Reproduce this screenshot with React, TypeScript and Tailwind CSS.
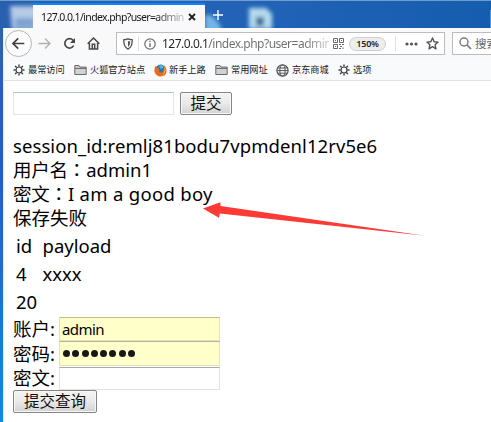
import React from 'react';

const Gear = () => (
  <svg className="h-[12px] w-[12px] shrink-0" viewBox="0 0 12 12" fill="none" stroke="#3c3c3c">
    <circle cx="6" cy="6" r="3" strokeWidth="1.2" />
    <path d="M6 .5v2M6 9.5v2M.5 6h2M9.5 6h2M2.1 2.1l1.5 1.5M8.4 8.4l1.5 1.5M2.1 9.9l1.5-1.5M8.4 3.6l1.5-1.5" strokeWidth="1.4" />
  </svg>
);

const Folder = () => (
  <svg className="h-[12px] w-[13px] shrink-0" viewBox="0 0 13 12" fill="#d2d2d2" stroke="#696969">
    <path d="M.8 10.5V1.5H5l1 1.6h6.2v7.4Z" />
    <path d="M1 4.4h11" />
  </svg>
);

const Firefox = () => (
  <svg className="h-[13px] w-[13px] shrink-0" viewBox="0 0 13 13">
    <circle cx="6.7" cy="6" r="5.4" fill="#2875b8" />
    <path d="M5 2.2 7 1l2.5 1L9 4 7 5Z" fill="#54b9dc" />
    <path d="M1.3 2 2.8 3.4 5 3.5 4.4 5.2 6 6 4.8 7.4C6 9 8.3 8.8 9.3 7.2L10 4l-.7-2.4C14 4.5 13.3 10.4 9.2 12 4.8 13.6 0 10.5.4 5.6Z" fill="#e96a1c" />
    <path d="M10.4 3c2.6 4 .2 8.2-3.7 8.4 2.7-.8 4.2-3 3.7-8.4Z" fill="#f8b334" />
  </svg>
);

const Globe = () => (
  <svg className="h-[13px] w-[13px] shrink-0" viewBox="0 0 13 13" fill="none" stroke="#555">
    <circle cx="6.5" cy="6.5" r="5.6" strokeWidth="1.2" />
    <ellipse cx="6.5" cy="6.5" rx="2.7" ry="5.6" />
    <path d="M1.6 4h9.8M1 6.6h11M1.6 9.2h9.8" />
  </svg>
);

function TabStrip() {
  return (
    <div className="relative h-[28px] shrink-0 overflow-hidden bg-gradient-to-r from-[#285fae] via-[#2263b7] to-[#155dae]">
      <svg className="absolute inset-0 h-full w-full" viewBox="0 0 491 28" preserveAspectRatio="none">
        <defs>
          <filter id="soft" x="-50%" y="-50%" width="200%" height="200%"><feGaussianBlur stdDeviation="2" /></filter>
        </defs>
        <g filter="url(#soft)">
          <path d="M10 6h28v24H12Z" fill="#b6cbe7" />
          <path d="M15 18h20v10H15Z" fill="#7da3d3" />
          <path d="M205 15h6l8 8 3 8h-17Z" fill="#76b5e7" />
          <path d="M249 8h17l6 6v15h-23Z" fill="#b4dcee" />
          <path d="M256 17h8v9h-8Z" fill="#416c91" />
        </g>
        <path d="M0 .5h491" stroke="#709ccb" />
        <path d="M490.5 10v18" stroke="#4f98dc" />
      </svg>
      <div className="relative ml-[33px] flex h-[28px] items-center">
        <div className="mt-[3px] flex h-[25px] w-[172px] shrink-0 items-center border-t-[2px] border-[#0a84ff] bg-[#f9f9fb]">
          <span className="ml-[8px] w-[145px] shrink-0 bg-[linear-gradient(90deg,#151515_78%,#d5d5d7)] bg-clip-text text-[10.5px] leading-[18px] tracking-[-0.62px] whitespace-nowrap text-transparent">127.0.0.1/index.php?user=admin</span>
          <svg className="ml-[2px] h-[8px] w-[8px] shrink-0" viewBox="0 0 8 8" stroke="#202020" strokeWidth="1.8"><path d="m1 1 6 6M7 1 1 7" /></svg>
        </div>
        <svg className="mt-[2px] ml-[7px] h-[12px] w-[12px] shrink-0" viewBox="0 0 12 12" stroke="#fff" strokeWidth="1.4"><path d="M6 1v10M1 6h10" /></svg>
      </div>
    </div>
  );
}

function Toolbar() {
  return (
    <div className="flex h-[32px] shrink-0 items-start bg-[#f9f9fa] pl-[1px]">
      <div className="mt-[2px] flex h-[27px] w-[27px] shrink-0 items-center justify-center rounded-full border border-[#b5b5b5] bg-[#fcfcfc]">
        <svg className="h-[13px] w-[13px]" viewBox="0 0 13 13" fill="none" stroke="#424244" strokeWidth="1.7"><path d="M12.3 6.5H1.2M6.2 1.3 1 6.5l5.2 5.2" /></svg>
      </div>
      <svg className="mt-[9px] ml-[6px] h-[13px] w-[13px] shrink-0" viewBox="0 0 13 13" fill="none" stroke="#b0b0b2" strokeWidth="1.3"><path d="M.5 6.5H12M7 1.5l5 5-5 5" /></svg>
      <svg className="mt-[9px] ml-[12px] h-[13px] w-[13px] shrink-0" viewBox="0 0 13 13" fill="none" stroke="#49494b" strokeWidth="1.7"><path d="M10.6 8.7A4.7 4.7 0 1 1 10 3.2L11 4.4" /><path d="M12 1v5H7Z" fill="#49494b" stroke="none" /></svg>
      <svg className="mt-[9px] ml-[11px] h-[13px] w-[13px] shrink-0" viewBox="0 0 13 13" fill="none" stroke="#49494b" strokeWidth="1.5"><path d="M.7 6.8 6.5 1l5.8 5.8M2.4 6v6h8.2V6" /><path d="M5.3 12V7.2h2.4V12" /></svg>
      <div className="mt-[4px] ml-[16px] flex h-[23px] w-[329px] shrink-0 items-center border border-[#bcbcbe] bg-white">
        <svg className="ml-[6px] h-[12px] w-[10px] shrink-0" viewBox="0 0 10 12" fill="none" stroke="#555558" strokeWidth="1.3"><path d="M.8 1.7Q3 1.6 5 .8q2 .8 4.2.9C9.4 6.6 8.3 9.6 5 11.2 1.7 9.6.6 6.6.8 1.7Z" /><path d="M5 3v6C6.7 7.7 7.2 6 7.2 3.6Z" fill="#555558" stroke="none" /></svg>
        <div className="ml-[5px] h-[15px] w-px bg-[#e2e2e3]" />
        <svg className="ml-[5px] h-[12px] w-[12px] shrink-0" viewBox="0 0 12 12" fill="none" stroke="#6d6d70"><circle cx="6" cy="6" r="5.2" strokeWidth="1.2" /><path d="M6 5.2v3.7M6 2.7v1.4" strokeWidth="1.4" /></svg>
        <span className="ml-[6px] w-[167px] shrink-0 bg-[linear-gradient(90deg,#202124_27%,#6d6d70_27%,#6d6d70_84%,#d5d5d7)] bg-clip-text text-[12px] leading-[20px] tracking-[-0.5px] whitespace-nowrap text-transparent">127.0.0.1/index.php?user=admin</span>
        <svg className="ml-[4px] h-[11px] w-[11px] shrink-0" viewBox="0 0 11 11" fill="none" stroke="#67676a"><path d="M.5.5h4v4h-4ZM6.5.5h4v4h-4ZM.5 6.5h4v4h-4Z" /><path d="M2 2.5h1M8 2.5h1M2 8.5h1M6 6.5h2M9 6.5h2M7 8.5h2M6 10.5h2M10 9.5v1.5" /></svg>
        <span className="ml-[5px] flex h-[14px] w-[37px] shrink-0 items-center justify-center rounded-full border border-[#cecfd0] bg-[#ededf0] text-[9px] leading-none font-semibold tracking-[-0.2px] text-[#252525]">150%</span>
        <div className="ml-[9px] h-[15px] w-px bg-[#e2e2e3]" />
        <svg className="ml-[9px] h-[4px] w-[13px] shrink-0" viewBox="0 0 13 4" fill="#555558"><circle cx="2" cy="2" r="1.6" /><circle cx="6.5" cy="2" r="1.6" /><circle cx="11" cy="2" r="1.6" /></svg>
        <svg className="ml-[8px] h-[13px] w-[13px] shrink-0" viewBox="0 0 13 13" fill="none" stroke="#555558" strokeWidth="1.4" strokeLinejoin="round"><path d="m6.5 1 1.6 3.7 4 .4-3 2.7.9 4-3.5-2.1L3 11.8l.9-4-3-2.7 4-.4Z" /></svg>
      </div>
      <div className="mt-[4px] ml-[7px] flex h-[23px] w-[60px] shrink-0 items-center border border-[#bcbcbe] bg-white">
        <svg className="ml-[6px] h-[13px] w-[13px] shrink-0" viewBox="0 0 13 13" fill="none" stroke="#77777a" strokeWidth="1.4"><circle cx="5" cy="5" r="4" /><path d="m8 8 4 4" strokeWidth="1.7" /></svg>
        <span className="ml-[3px] text-[11.5px] whitespace-nowrap text-[#69696c]">搜索</span>
      </div>
    </div>
  );
}

function Bookmarks() {
  return (
    <div className="flex h-[21px] shrink-0 items-center border-b border-[#e1e2e3] bg-[#f9fafb] pl-[9px] text-[9.2px] leading-none whitespace-nowrap text-[#202020]">
      <div className="flex w-[61px] items-center gap-[3px]"><Gear /><span>最常访问</span></div>
      <div className="flex w-[80px] items-center gap-[3px]"><Folder /><span>火狐官方站点</span></div>
      <div className="flex w-[61px] items-center gap-[2px]"><Firefox /><span>新手上路</span></div>
      <div className="flex w-[61px] items-center gap-[3px]"><Folder /><span>常用网址</span></div>
      <div className="flex w-[62px] items-center gap-[3px]"><Globe /><span>京东商城</span></div>
      <div className="flex items-center gap-[3px]"><Gear /><span>选项</span></div>
    </div>
  );
}

const Colon = () => <span className="font-['Noto_Sans_CJK_TC',sans-serif] leading-none">：</span>;

const buttonStyle = 'flex items-center justify-center rounded-[2px] border border-[#858585] bg-gradient-to-b from-[#f4f4f4] via-[#eaeaea] via-50% to-[#d2d2d2] text-[15.5px] leading-none text-[#111] shadow-[inset_0_0_0_1px_#f8f8f8]';

export default function App() {
  return (
    <div className="flex h-[422px] w-[491px] flex-col overflow-hidden bg-white font-['Noto_Sans','Noto_Sans_CJK_SC',sans-serif] text-black">
      <TabStrip />
      <div className="flex min-h-0 flex-1">
        <div className="w-[3px] shrink-0 bg-gradient-to-b from-[#2b64b1] via-[#1f60bd] via-35% to-[#1687df]" />
        <div className="flex w-[488px] shrink-0 flex-col border-l border-[#e1edf7]">
          <Toolbar />
          <Bookmarks />
          <main className="flex flex-col items-start pl-[9px] text-[18.5px] leading-[24px]">
            <div className="mt-[11px] flex h-[23px] items-start">
              <input aria-label="查询" className="h-[23px] w-[161px] border border-[#dfe5ea] border-t-[#abc5d3] bg-white outline-none" />
              <button className={`${buttonStyle} ml-[6px] h-[23px] w-[52px]`}>提交</button>
            </div>
            <div className="mt-[19px] h-[24px] tracking-[0.08px] whitespace-nowrap">session_id:remlj81bodu7vpmdenl12rv5e6</div>
            <div className="h-[24px] whitespace-nowrap"><span className="tracking-[-0.3px]">用户名</span><Colon />admin1</div>
            <div className="relative h-[24px] whitespace-nowrap"><span className="tracking-[-0.3px]">密文</span><Colon /><span className="tracking-[0.3px]">I am a good boy</span>
              <svg className="absolute top-[18px] left-[190px] h-[40px] w-[222px]" viewBox="0 0 224 40" preserveAspectRatio="none" fill="#fd3a35"><path d="m0 8.5 17.5-6.3.2 3.8L224 35.8 17 13.5l-1 4.3Z" /></svg>
            </div>
            <div className="h-[24px] whitespace-nowrap">保存失败</div>
            <div className="mt-[2px] grid grid-cols-[26.5px_auto] grid-rows-[28px_28px_28px] items-center pl-[3px]">
              <span>id</span><span>payload</span><span>4</span><span>xxxx</span><span>20</span>
            </div>
            <form className="mt-[1px] flex flex-col items-start">
              <label className="flex h-[24px] items-center"><span className="w-[46px] whitespace-nowrap">账户:</span><input defaultValue="admin" className="h-[24px] w-[161px] border border-[#e2e2ba] border-t-[#bfbf85] bg-[#ffffca] pl-[2px] text-[15px] leading-none tracking-[-0.55px] outline-none" /></label>
              <label className="flex h-[25px] items-center"><span className="w-[46px] whitespace-nowrap">密码:</span><span className="flex h-[25px] w-[161px] items-center gap-[2.3px] border border-[#e2e2ba] border-t-[#b3b3a3] bg-[#ffffca] pl-[3px]">{Array.from({ length: 8 }, (_, i) => <span key={i} className="h-[7px] w-[7px] rounded-full bg-[#171717]" />)}</span></label>
              <label className="flex h-[24px] items-center"><span className="w-[46px] whitespace-nowrap">密文:</span><input className="h-[23px] w-[161px] border border-[#e2e2e2] border-t-[#aaa] bg-white outline-none" /></label>
              <button type="button" className={`${buttonStyle} h-[23px] w-[84px]`}>提交查询</button>
            </form>
          </main>
        </div>
      </div>
    </div>
  );
}
